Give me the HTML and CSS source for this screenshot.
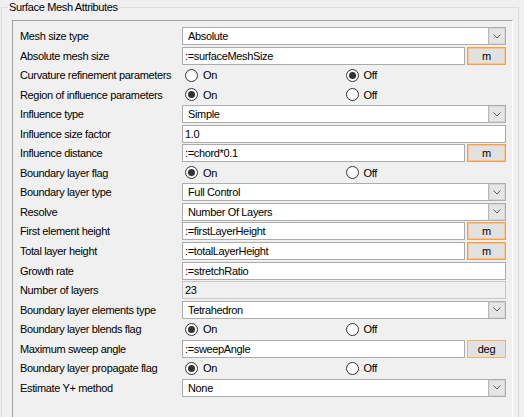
FILE: index.html
```html
<!DOCTYPE html>
<html>
<head>
<meta charset="utf-8">
<link rel="stylesheet" href="styles.css">
</head>
<body>
<fieldset class="group">
  <legend class="legend">Surface Mesh Attributes</legend>
  <div class="panel">
    <div class="form">
      <div class="label">Mesh size type</div>
      <div class="combo"><span class="value">Absolute</span><span class="arrow"><svg width="8" height="5" viewBox="0 0 8 5"><polyline points="0.5,0.5 4,4 7.5,0.5" fill="none" stroke="#5a5a5a" stroke-width="1"/></svg></span></div>

      <div class="label">Absolute mesh size</div>
      <div class="unitfield"><div class="text">:=surfaceMeshSize</div><div class="unit">m</div></div>

      <div class="label">Curvature refinement parameters</div>
      <div class="radios"><div class="opt"><span class="radio"></span>On</div><div class="opt"><span class="radio on"></span>Off</div></div>

      <div class="label">Region of influence parameters</div>
      <div class="radios"><div class="opt"><span class="radio on"></span>On</div><div class="opt"><span class="radio"></span>Off</div></div>

      <div class="label">Influence type</div>
      <div class="combo"><span class="value">Simple</span><span class="arrow"><svg width="8" height="5" viewBox="0 0 8 5"><polyline points="0.5,0.5 4,4 7.5,0.5" fill="none" stroke="#5a5a5a" stroke-width="1"/></svg></span></div>

      <div class="label">Influence size factor</div>
      <div class="text">1.0</div>

      <div class="label">Influence distance</div>
      <div class="unitfield"><div class="text">:=chord*0.1</div><div class="unit">m</div></div>

      <div class="label">Boundary layer flag</div>
      <div class="radios"><div class="opt"><span class="radio on"></span>On</div><div class="opt"><span class="radio"></span>Off</div></div>

      <div class="label">Boundary layer type</div>
      <div class="combo"><span class="value">Full Control</span><span class="arrow"><svg width="8" height="5" viewBox="0 0 8 5"><polyline points="0.5,0.5 4,4 7.5,0.5" fill="none" stroke="#5a5a5a" stroke-width="1"/></svg></span></div>

      <div class="label">Resolve</div>
      <div class="combo"><span class="value">Number Of Layers</span><span class="arrow"><svg width="8" height="5" viewBox="0 0 8 5"><polyline points="0.5,0.5 4,4 7.5,0.5" fill="none" stroke="#5a5a5a" stroke-width="1"/></svg></span></div>

      <div class="label">First element height</div>
      <div class="unitfield"><div class="text">:=firstLayerHeight</div><div class="unit">m</div></div>

      <div class="label">Total layer height</div>
      <div class="unitfield"><div class="text">:=totalLayerHeight</div><div class="unit">m</div></div>

      <div class="label">Growth rate</div>
      <div class="text">:=stretchRatio</div>

      <div class="label">Number of layers</div>
      <div class="text readonly">23</div>

      <div class="label">Boundary layer elements type</div>
      <div class="combo"><span class="value">Tetrahedron</span><span class="arrow"><svg width="8" height="5" viewBox="0 0 8 5"><polyline points="0.5,0.5 4,4 7.5,0.5" fill="none" stroke="#5a5a5a" stroke-width="1"/></svg></span></div>

      <div class="label">Boundary layer blends flag</div>
      <div class="radios"><div class="opt"><span class="radio on"></span>On</div><div class="opt"><span class="radio"></span>Off</div></div>

      <div class="label">Maximum sweep angle</div>
      <div class="unitfield"><div class="text">:=sweepAngle</div><div class="unit thin">deg</div></div>

      <div class="label">Boundary layer propagate flag</div>
      <div class="radios"><div class="opt"><span class="radio on"></span>On</div><div class="opt"><span class="radio"></span>Off</div></div>

      <div class="label">Estimate Y+ method</div>
      <div class="combo"><span class="value">None</span><span class="arrow"><svg width="8" height="5" viewBox="0 0 8 5"><polyline points="0.5,0.5 4,4 7.5,0.5" fill="none" stroke="#5a5a5a" stroke-width="1"/></svg></span></div>
    </div>
  </div>
</fieldset>
</body>
</html>
```

FILE: styles.css
```css
html, body {
  margin: 0;
  padding: 0;
  background: #f0f0f0;
  overflow: hidden;
}

body {
  font-family: "Liberation Sans", Arial, sans-serif;
  font-size: 11px;
  letter-spacing: -0.35px;
  color: #000;
}

.group {
  margin: 0 0 0 1px;
  padding: 0;
  width: 516px;
  border: 1px solid #dcdcdc;
  min-inline-size: 0;
}

.legend {
  margin-left: 6px;
  padding: 0 1px;
  line-height: 14px;
  height: 14px;
}

.panel {
  margin: 6px 0 0 10px;
  width: 486px;
  padding: 6px 6px 30px 7px;
  border-top: 1px solid #a0a0a0;
  border-left: 1px solid #a0a0a0;
  border-right: 1px solid #ffffff;
  border-bottom: 1px solid #ffffff;
}

.form {
  display: grid;
  grid-template-columns: 162px 324px;
  grid-auto-rows: 19.56px;
}

.label {
  display: flex;
  align-items: center;
  height: 18px;
  white-space: nowrap;
}

.combo {
  height: 18px;
  box-sizing: border-box;
  border: 1px solid #adadad;
  background: #fff;
  display: flex;
  align-items: stretch;
}

.combo .value {
  flex: 1;
  padding-left: 5px;
  display: flex;
  align-items: center;
}

.arrow {
  width: 16px;
  background: #e5e5e5;
  border-left: 1px solid #b9b9b9;
  box-shadow: inset 0 0 0 1px #d6d6d6;
  display: flex;
  align-items: center;
  justify-content: center;
}

.arrow svg {
  display: block;
}

.text {
  height: 18px;
  box-sizing: border-box;
  border: 1px solid #ababab;
  background: #fff;
  padding-left: 2px;
  display: flex;
  align-items: center;
  white-space: nowrap;
}

.text.readonly {
  background: #f0f0f0;
  border-color: #c6c6c6;
}

.unitfield {
  display: grid;
  grid-template-columns: 1fr 39px;
  column-gap: 2px;
  height: 18px;
}

.unit {
  box-sizing: border-box;
  height: 18px;
  border: 1px solid #f3a04b;
  box-shadow: inset 0 0 0 1px #f8c58e;
  background: #e1e1e1;
  display: flex;
  align-items: center;
  justify-content: center;
}

.unit.thin {
  box-shadow: none;
  border-color: #f5b06a;
}

.radios {
  display: grid;
  grid-template-columns: 1fr 1fr;
  padding-left: 3px;
  height: 18px;
}

.opt {
  display: flex;
  align-items: center;
  gap: 5px;
}

.radio {
  width: 13px;
  height: 13px;
  box-sizing: border-box;
  border: 1px solid #333;
  border-radius: 50%;
  background: #fff;
  display: flex;
  align-items: center;
  justify-content: center;
}

.radio.on::after {
  content: "";
  width: 7px;
  height: 7px;
  border-radius: 50%;
  background: #333;
}
```
